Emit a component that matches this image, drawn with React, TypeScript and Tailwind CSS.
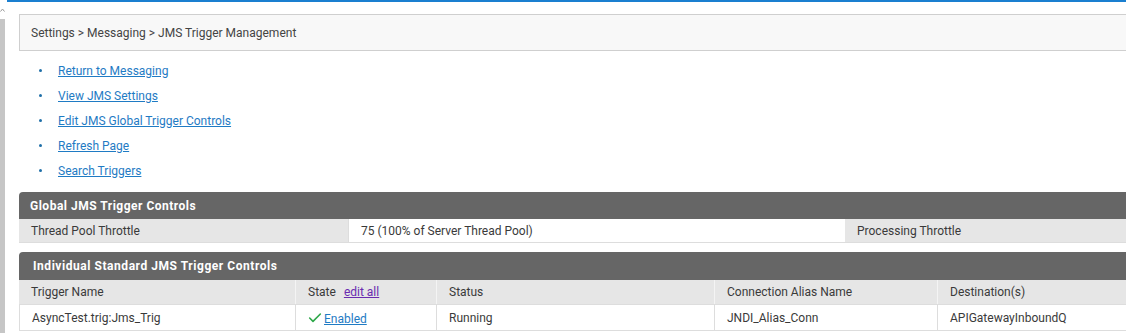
import { Check } from 'lucide-react';

const LINKS = [
  'Return to Messaging',
  'View JMS Settings',
  'Edit JMS Global Trigger Controls',
  'Refresh Page',
  'Search Triggers',
];

export default function App() {
  return (
    <div
      className="flex w-[1126px] h-[333px] overflow-hidden bg-white text-[#3a3a3a]"
      style={{ fontFamily: 'Roboto, "Noto Sans", sans-serif' }}
    >
      {/* left scroll strip */}
      <div className="flex flex-col w-[5px] shrink-0">
        <div className="h-[19px] flex items-center justify-center">
          <svg width="5" height="4" viewBox="0 0 5 4">
            <path d="M0.5 3.5 L2.5 1 L4.5 3.5" fill="none" stroke="#999" strokeWidth="1" />
          </svg>
        </div>
        <div className="flex-1 bg-[#c6c6c6]" />
      </div>

      <div className="flex-1 ml-[2px] border-t-2 border-[#1a7fd0] pl-[12px] min-w-0">
        {/* breadcrumb */}
        <div className="mt-[12px] h-[37px] w-[1200px] border border-[#cfcfcf] bg-[#f8f8f8] flex items-center pl-[11px] text-[12px] text-[#444]">
          Settings &gt; Messaging &gt; JMS Trigger Management
        </div>

        {/* links */}
        <ul className="mt-[11px] pl-[20px] flex flex-col gap-[8px] text-[12px]">
          {LINKS.map((l) => (
            <li key={l} className="flex items-center h-[17px]">
              <span className="w-[3px] h-[3px] rounded-full bg-[#1f6fa8] mr-[16px]" />
              <a href="#" className="text-[#1f7bc4] underline">{l}</a>
            </li>
          ))}
        </ul>

        {/* global controls */}
        <div className="mt-[13px] w-[1200px]">
          <div className="h-[27px] bg-[#666] rounded-t-[4px] flex items-center pl-[11px] text-white font-bold text-[12px] tracking-[0.5px]">
            Global JMS Trigger Controls
          </div>
          <div className="flex h-[24px] text-[12px] border-b border-[#ddd]">
            <div className="w-[329px] bg-[#e6e6e6] flex items-center pl-[12px]">Thread Pool Throttle</div>
            <div className="w-[497px] bg-white flex items-center pl-[12px] border-l border-[#ddd]">75 (100% of Server Thread Pool)</div>
            <div className="flex-1 bg-[#e6e6e6] flex items-center pl-[12px]">Processing Throttle</div>
          </div>
        </div>

        {/* individual controls */}
        <div className="mt-[9px] w-[1200px]">
          <div className="h-[28px] bg-[#666] rounded-t-[4px] flex items-center pl-[14px] text-white font-bold text-[12px] tracking-[0.55px]">
            Individual Standard JMS Trigger Controls
          </div>
          <div className="flex h-[25px] text-[12px] bg-[#e6e6e6] border-b border-[#ddd]">
            <div className="w-[277px] flex items-center pl-[12px] border-r border-[#f4f4f4]">Trigger Name</div>
            <div className="w-[141px] flex items-center pl-[12px] border-r border-[#f4f4f4]">
              State
              <a href="#" className="ml-[8px] text-[#6a2bb0] underline">edit all</a>
            </div>
            <div className="w-[278px] flex items-center pl-[12px] border-r border-[#f4f4f4]">Status</div>
            <div className="w-[223px] flex items-center pl-[12px] border-r border-[#f4f4f4]">Connection Alias Name</div>
            <div className="flex-1 flex items-center pl-[12px]">Destination(s)</div>
          </div>
          <div className="flex h-[26px] text-[12px] bg-white border-b border-[#ddd]">
            <div className="w-[277px] flex items-center pl-[12px] border-r border-[#ddd] border-l">AsyncTest.trig:Jms_Trig</div>
            <div className="w-[141px] flex items-center pl-[11px] border-r border-[#ddd]">
              <Check size={16} strokeWidth={2.4} className="text-[#2ea84a] mr-[1px]" />
              <a href="#" className="text-[#1f7bc4] underline mt-[2px]">Enabled</a>
            </div>
            <div className="w-[278px] flex items-center pl-[12px] border-r border-[#ddd]">Running</div>
            <div className="w-[223px] flex items-center pl-[12px] border-r border-[#ddd]">JNDI_Alias_Conn</div>
            <div className="flex-1 flex items-center pl-[12px]">APIGatewayInboundQ</div>
          </div>
        </div>
      </div>
    </div>
  );
}
